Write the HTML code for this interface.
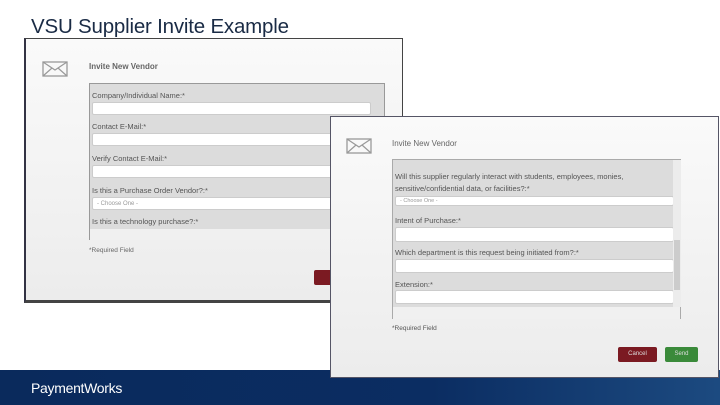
<!DOCTYPE html>
<html><head><style>
*{margin:0;padding:0;box-sizing:border-box}
body{width:720px;height:405px;position:relative;overflow:hidden;background:#fff;font-family:"Liberation Sans",Arial,sans-serif}
.a{position:absolute}
.t{font-family:"Liberation Sans",sans-serif;font-size:20.5px;color:#1a2b45;left:31px;top:15px;letter-spacing:-0.2px}
.shot{position:absolute;background:linear-gradient(#fafafa,#ececec);border:1px solid #444}
.lab{position:absolute;font-size:7.5px;color:#555}
.inp{position:absolute;background:#fff;border:1px solid #ccc;border-radius:2px}
.form{position:absolute;background:#dcdcdc;border:1px solid #999}
</style></head><body>
<div class="a t">VSU Supplier Invite Example</div>

<div class="shot" style="left:24px;top:38px;width:379px;height:265px;border-left:2px solid #334;border-bottom:3px solid #444">
  <svg class="a" style="left:16px;top:22px" width="26" height="16"><rect x="1" y="1" width="24" height="14" fill="none" stroke="#999" stroke-width="1.3"/><path d="M1 1 L13 9 L25 1 M1 15 L10 7 M25 15 L16 7" fill="none" stroke="#999" stroke-width="1.2"/></svg>
  <div class="a" style="left:63px;top:23px;font-size:8px;color:#666;font-weight:bold">Invite New Vendor</div>
  <div class="form" style="left:63px;top:44px;width:296px;height:157px">
    <div class="lab" style="left:2px;top:7px">Company/Individual Name:*</div>
    <div class="inp" style="left:2px;top:18px;width:279px;height:13px"></div>
    <div class="lab" style="left:2px;top:38px">Contact E-Mail:*</div>
    <div class="inp" style="left:2px;top:49px;width:279px;height:13px"></div>
    <div class="lab" style="left:2px;top:70px">Verify Contact E-Mail:*</div>
    <div class="inp" style="left:2px;top:81px;width:279px;height:13px"></div>
    <div class="lab" style="left:2px;top:102px">Is this a Purchase Order Vendor?:*</div>
    <div class="inp" style="left:2px;top:113px;width:279px;height:13px;font-size:6px;color:#999;padding:3px 4px">- Choose One -</div>
    <div class="lab" style="left:2px;top:133px">Is this a technology purchase?:*</div>
    <div class="a" style="left:0;top:145px;width:294px;height:11px;background:#f0f0f0"></div>
  </div>
  <div class="a" style="left:63px;top:208px;font-size:6.5px;color:#666">*Required Field</div>
  <div class="a" style="left:288px;top:231px;width:20px;height:15px;background:#7b1a22;border-radius:2px"></div>
</div>

<div class="a" style="left:0;top:370px;width:720px;height:35px;background:linear-gradient(90deg,#0a2a5c 0%,#0b2d62 60%,#1c4a80 100%)"></div>
<div class="a" style="left:31px;top:380px;color:#fff;font-size:14px;font-family:'Liberation Sans',sans-serif;letter-spacing:-0.3px">PaymentWorks</div>

<div class="shot" style="left:330px;top:116px;width:389px;height:262px;border:1px solid #556">
  <svg class="a" style="left:15px;top:21px" width="26" height="16"><rect x="1" y="1" width="24" height="14" fill="none" stroke="#999" stroke-width="1.3"/><path d="M1 1 L13 9 L25 1 M1 15 L10 7 M25 15 L16 7" fill="none" stroke="#999" stroke-width="1.2"/></svg>
  <div class="a" style="left:61px;top:22px;font-size:8px;color:#666">Invite New Vendor</div>
  <div class="form" style="left:61px;top:42px;width:289px;height:160px;border-color:#aaa">
    <div class="lab" style="left:2px;top:12px">Will this supplier regularly interact with students, employees, monies,</div>
    <div class="lab" style="left:2px;top:24px">sensitive/confidential data, or facilities?:*</div>
    <div class="inp" style="left:2px;top:36px;width:279px;height:10px;font-size:5.5px;color:#999;padding:1px 4px">- Choose One -</div>
    <div class="lab" style="left:2px;top:56px">Intent of Purchase:*</div>
    <div class="inp" style="left:2px;top:67px;width:279px;height:15px"></div>
    <div class="lab" style="left:2px;top:88px">Which department is this request being initiated from?:*</div>
    <div class="inp" style="left:2px;top:99px;width:279px;height:14px"></div>
    <div class="lab" style="left:2px;top:120px">Extension:*</div>
    <div class="inp" style="left:2px;top:130px;width:279px;height:14px"></div>
    <div class="a" style="left:0;top:147px;width:287px;height:12px;background:#f0f0f0"></div>
    <div class="a" style="left:280px;top:0;width:8px;height:147px;background:#ececec"></div>
    <div class="a" style="left:281px;top:80px;width:6px;height:50px;background:#ccc"></div>
  </div>
  <div class="a" style="left:61px;top:208px;font-size:6.5px;color:#555">*Required Field</div>
  <div class="a" style="left:287px;top:230px;width:39px;height:15px;background:#7b1a22;border-radius:2px;color:#ddd;font-size:6px;text-align:center;line-height:15px">Cancel</div>
  <div class="a" style="left:334px;top:230px;width:33px;height:15px;background:#3a8a3a;border-radius:2px;color:#ddd;font-size:6px;text-align:center;line-height:15px">Send</div>
</div>
</body></html>
